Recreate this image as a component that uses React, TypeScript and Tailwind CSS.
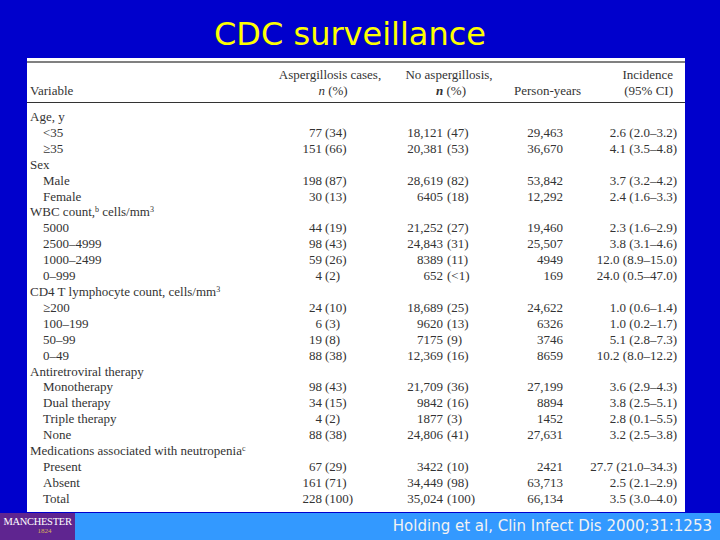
import React from "react";

type Row =
  | { kind: "cat"; label: React.ReactNode }
  | { kind: "row"; label: string; a: [string, string]; b: [string, string]; py: string; inc: string };

const rows: Row[] = [
  { kind: "cat", label: "Age, y" },
  { kind: "row", label: "<35", a: ["77", "(34)"], b: ["18,121", "(47)"], py: "29,463", inc: "2.6 (2.0–3.2)" },
  { kind: "row", label: "≥35", a: ["151", "(66)"], b: ["20,381", "(53)"], py: "36,670", inc: "4.1 (3.5–4.8)" },
  { kind: "cat", label: "Sex" },
  { kind: "row", label: "Male", a: ["198", "(87)"], b: ["28,619", "(82)"], py: "53,842", inc: "3.7 (3.2–4.2)" },
  { kind: "row", label: "Female", a: ["30", "(13)"], b: ["6405", "(18)"], py: "12,292", inc: "2.4 (1.6–3.3)" },
  {
    kind: "cat",
    label: (
      <>
        WBC count,<sup className="text-[8px]">b</sup> cells/mm<sup className="text-[8px]">3</sup>
      </>
    ),
  },
  { kind: "row", label: "5000", a: ["44", "(19)"], b: ["21,252", "(27)"], py: "19,460", inc: "2.3 (1.6–2.9)" },
  { kind: "row", label: "2500–4999", a: ["98", "(43)"], b: ["24,843", "(31)"], py: "25,507", inc: "3.8 (3.1–4.6)" },
  { kind: "row", label: "1000–2499", a: ["59", "(26)"], b: ["8389", "(11)"], py: "4949", inc: "12.0 (8.9–15.0)" },
  { kind: "row", label: "0–999", a: ["4", "(2)"], b: ["652", "(<1)"], py: "169", inc: "24.0 (0.5–47.0)" },
  {
    kind: "cat",
    label: (
      <>
        CD4 T lymphocyte count, cells/mm<sup className="text-[8px]">3</sup>
      </>
    ),
  },
  { kind: "row", label: "≥200", a: ["24", "(10)"], b: ["18,689", "(25)"], py: "24,622", inc: "1.0 (0.6–1.4)" },
  { kind: "row", label: "100–199", a: ["6", "(3)"], b: ["9620", "(13)"], py: "6326", inc: "1.0 (0.2–1.7)" },
  { kind: "row", label: "50–99", a: ["19", "(8)"], b: ["7175", "(9)"], py: "3746", inc: "5.1 (2.8–7.3)" },
  { kind: "row", label: "0–49", a: ["88", "(38)"], b: ["12,369", "(16)"], py: "8659", inc: "10.2 (8.0–12.2)" },
  { kind: "cat", label: "Antiretroviral therapy" },
  { kind: "row", label: "Monotherapy", a: ["98", "(43)"], b: ["21,709", "(36)"], py: "27,199", inc: "3.6 (2.9–4.3)" },
  { kind: "row", label: "Dual therapy", a: ["34", "(15)"], b: ["9842", "(16)"], py: "8894", inc: "3.8 (2.5–5.1)" },
  { kind: "row", label: "Triple therapy", a: ["4", "(2)"], b: ["1877", "(3)"], py: "1452", inc: "2.8 (0.1–5.5)" },
  { kind: "row", label: "None", a: ["88", "(38)"], b: ["24,806", "(41)"], py: "27,631", inc: "3.2 (2.5–3.8)" },
  {
    kind: "cat",
    label: (
      <>
        Medications associated with neutropenia<sup className="text-[8px]">c</sup>
      </>
    ),
  },
  { kind: "row", label: "Present", a: ["67", "(29)"], b: ["3422", "(10)"], py: "2421", inc: "27.7 (21.0–34.3)" },
  { kind: "row", label: "Absent", a: ["161", "(71)"], b: ["34,449", "(98)"], py: "63,713", inc: "2.5 (2.1–2.9)" },
  { kind: "row", label: "Total", a: ["228", "(100)"], b: ["35,024", "(100)"], py: "66,134", inc: "3.5 (3.0–4.0)" },
];

export default function App() {
  return (
    <div className="w-[720px] h-[540px] bg-[#0000cc] flex flex-col overflow-hidden">
      <div className="h-[58px] flex items-center justify-center pr-[20px] pt-[10px]">
        <span
          className="text-[32px] leading-none text-[#ffff00]"
          style={{ fontFamily: '"DejaVu Sans", sans-serif' }}
        >
          CDC surveillance
        </span>
      </div>

      <div
        className="ml-[27px] w-[658px] h-[454px] bg-white pt-[3px] text-[13px] text-[#333]"
        style={{ fontFamily: '"Liberation Serif", serif' }}
      >
        <div className="h-[2px] bg-[#808080]" />
        <div className="mt-[4px] flex h-[16px] leading-[16px]">
          <div className="w-[240px]" />
          <div className="w-[126px] text-center">Aspergillosis cases,</div>
          <div className="w-[112px] text-center">No aspergillosis,</div>
          <div className="w-[80px]" />
          <div className="w-[88px] text-right">Incidence</div>
        </div>
        <div className="flex h-[16px] leading-[16px]">
          <div className="w-[240px] pl-[3px]">Variable</div>
          <div className="w-[126px] text-center pl-[6px]">
            <i>n</i> (%)
          </div>
          <div className="w-[112px] text-center pl-[4px]">
            <i className="font-bold">n</i> (%)
          </div>
          <div className="w-[80px] pl-[9px]">Person-years</div>
          <div className="w-[88px] text-right">(95% CI)</div>
        </div>
        <div className="mt-[3px] h-[1px] bg-[#333]" />
        <div className="mt-[6px] flex flex-col">
          {rows.map((r, i) =>
            r.kind === "cat" ? (
              <div key={i} className="h-[15.92px] leading-[15.92px] pl-[3px] whitespace-nowrap">
                {r.label}
              </div>
            ) : (
              <div key={i} className="h-[15.92px] leading-[15.92px] flex whitespace-nowrap">
                <div className="w-[240px] pl-[16px]">{r.label}</div>
                <div className="w-[55px] text-right">{r.a[0]}</div>
                <div className="w-[45px] pl-[3px]">{r.a[1]}</div>
                <div className="w-[76px] text-right">{r.b[0]}</div>
                <div className="w-[54px] pl-[4px]">{r.b[1]}</div>
                <div className="w-[66px] text-right">{r.py}</div>
                <div className="w-[114px] text-right">{r.inc}</div>
              </div>
            )
          )}
        </div>
      </div>

      <div className="mt-[1px] h-[27px] flex bg-[#3399ff]">
        <div
          className="w-[75px] h-full bg-[#5f2590] flex flex-col items-center pt-[3px]"
          style={{ fontFamily: '"Liberation Serif", serif' }}
        >
          <span className="text-[10.5px] leading-[11px] text-white tracking-[-0.3px]">MANCHESTER</span>
          <span className="text-[7px] leading-[8px] text-[#d9b25a] pl-[14px]">1824</span>
        </div>
        <div className="flex-1 flex items-center justify-end pr-[8px]">
          <span
            className="text-[15px] leading-none text-[#f2f2f2]"
            style={{ fontFamily: '"DejaVu Sans", sans-serif' }}
          >
            Holding et al, Clin Infect Dis 2000;31:1253
          </span>
        </div>
      </div>
    </div>
  );
}
